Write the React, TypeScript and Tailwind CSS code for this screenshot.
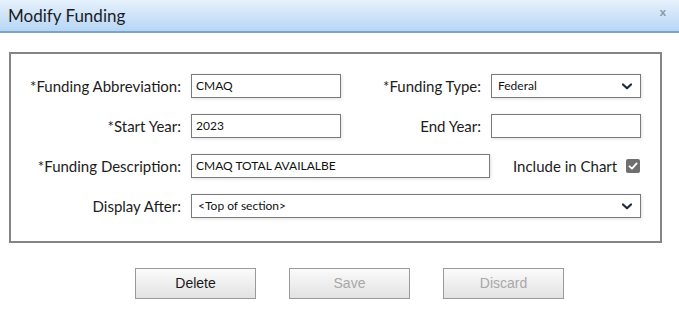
import React from 'react';

const labelCls = "text-right text-[15px] text-[#1c1c1c] pr-[10px] shrink-0";
const inputCls =
  "h-[24px] border border-[#7a7a7a] bg-white px-[4px] text-[12px] text-[#111] shadow-[1px_1px_3px_rgba(0,0,0,0.12)] flex items-center shrink-0";

const Chevron: React.FC = () => (
  <svg width="10" height="7" viewBox="0 0 10 7" className="ml-auto">
    <path d="M1 1.5 L5 5.2 L9 1.5" fill="none" stroke="#1f2a3a" strokeWidth="2.2" strokeLinecap="round" strokeLinejoin="round" />
  </svg>
);

const Field: React.FC<{ value?: string; width: string; select?: boolean }> = ({ value, width, select }) => (
  <div className={`${inputCls} ${width} ${select ? 'pl-[6px] pr-[8px]' : ''}`}>
    <span>{value}</span>
    {select && <Chevron />}
  </div>
);

const Button: React.FC<{ label: string; disabled?: boolean }> = ({ label, disabled }) => (
  <div
    className={`w-[121px] h-[31px] flex items-center justify-center border border-[#9a9a9a] bg-gradient-to-b from-[#fbfbfb] to-[#e2e2e2] text-[14px] font-['Liberation_Sans',sans-serif] ${
      disabled ? 'text-[#a8a8a8]' : 'text-[#1a1a1a]'
    }`}
  >
    {label}
  </div>
);

export default function App() {
  return (
    <div className="w-[679px] h-[318px] bg-white font-['Lato',sans-serif] overflow-hidden">
      {/* title bar */}
      <div className="h-[33px] flex items-center justify-between pl-[8px] pr-[13px] bg-gradient-to-b from-[#e6f1fc] to-[#b7d6f4] border-b-2 border-[#7ea3c8]">
        <span className="text-[17px] text-[#1b1b26]">Modify Funding</span>
        <span className="text-[12px] font-bold text-[#8797aa] -mt-[8px]">x</span>
      </div>

      {/* form box */}
      <div className="ml-[9px] mt-[19px] w-[653px] h-[191px] border-2 border-[#858585] pt-[20px] flex flex-col gap-[16px]">
        <div className="flex items-center">
          <div className={`${labelCls} w-[180px]`}>*Funding Abbreviation:</div>
          <Field value="CMAQ" width="w-[150px]" />
          <div className={`${labelCls} w-[150px]`}>*Funding Type:</div>
          <Field value="Federal" width="w-[150px]" select />
        </div>
        <div className="flex items-center">
          <div className={`${labelCls} w-[180px]`}>*Start Year:</div>
          <Field value="2023" width="w-[150px]" />
          <div className={`${labelCls} w-[150px]`}>End Year:</div>
          <Field width="w-[150px]" />
        </div>
        <div className="flex items-center">
          <div className={`${labelCls} w-[180px]`}>*Funding Description:</div>
          <Field value="CMAQ TOTAL AVAILALBE" width="w-[299px]" />
          <div className="ml-[23px] text-[15px] text-[#1c1c1c]">Include in Chart</div>
          <div className="ml-[9px] w-[14px] h-[14px] rounded-[2px] bg-[#6f6f6f] flex items-center justify-center">
            <svg width="10" height="10" viewBox="0 0 10 10">
              <path d="M1.5 5.3 L4 7.6 L8.6 2.4" fill="none" stroke="#fff" strokeWidth="1.8" strokeLinecap="round" strokeLinejoin="round" />
            </svg>
          </div>
        </div>
        <div className="flex items-center">
          <div className={`${labelCls} w-[180px]`}>Display After:</div>
          <Field value="<Top of section>" width="w-[450px]" select />
        </div>
      </div>

      {/* actions */}
      <div className="flex gap-[33px] pl-[135px] mt-[25px]">
        <Button label="Delete" />
        <Button label="Save" disabled />
        <Button label="Discard" disabled />
      </div>
    </div>
  );
}
